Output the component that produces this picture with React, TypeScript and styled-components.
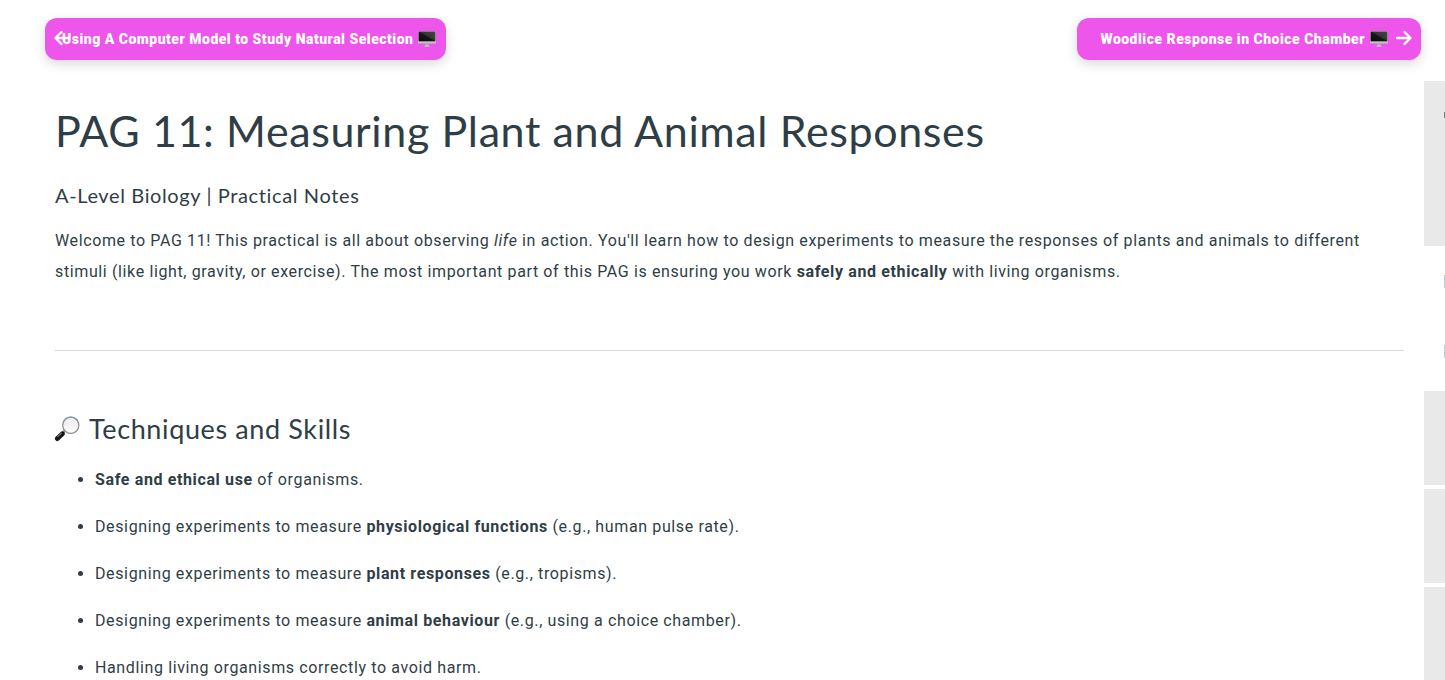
import React from "react";
import styled, { createGlobalStyle } from "styled-components";

const GlobalStyle = createGlobalStyle`
  *, *::before, *::after { box-sizing: border-box; }
  body {
    margin: 0;
    background: #fff;
    color: #2f3e46;
    font-family: Roboto, "Liberation Sans", sans-serif;
    font-size: 16px;
    line-height: 31px;
    letter-spacing: 0.039em;
    overflow-x: hidden;
  }
`;

const PagerNav = styled.nav`
  display: flex;
  justify-content: space-between;
  padding: 18px 24px 21px 45px;
`;

const PagerLink = styled.a<{ $direction: "previous" | "next" }>`
  position: relative;
  display: flex;
  align-items: center;
  gap: 5px;
  height: 42px;
  padding: ${(p) => (p.$direction === "previous" ? "0 10px 0 17px" : "0 33px 0 23px")};
  border-radius: 12px;
  background: #ee55eb;
  box-shadow: 0 4px 12px rgba(0, 0, 0, 0.15);
  color: #fff;
  font-size: 14px;
  font-weight: 900;
  letter-spacing: 0.035em;
  line-height: 20px;
  text-decoration: none;
  white-space: nowrap;
`;

const ArrowIcon = styled.svg<{ $side: "left" | "right" }>`
  position: absolute;
  top: 12px;
  ${(p) => p.$side}: 9px;
  width: 16px;
  height: 16px;
`;

const ScreenIcon = styled.svg`
  width: 18px;
  height: 16px;
`;

const Layout = styled.div`
  display: grid;
  grid-template-columns: minmax(0, 1fr) 21px;
`;

const Article = styled.main`
  padding: 24px 20px 0 55px;
`;

const Title = styled.h1`
  margin: 0;
  font-family: Lato, "Open Sans", sans-serif;
  font-size: 43px;
  font-weight: 400;
  line-height: 52px;
`;

const Subtitle = styled.h2`
  margin: 25px 0 17px;
  font-family: Lato, "Open Sans", sans-serif;
  font-size: 20px;
  font-weight: 400;
  line-height: 26px;
`;

const Intro = styled.p`
  margin: 0;
`;

const Divider = styled.hr`
  height: 1px;
  margin: 63px 0 61px;
  border: 0;
  background: #d8dadb;
`;

const SectionTitle = styled.h2`
  display: flex;
  align-items: center;
  gap: 9px;
  margin: 0 0 18px;
  font-family: Lato, "Open Sans", sans-serif;
  font-size: 27px;
  font-weight: 400;
  line-height: 34px;
`;

const LensIcon = styled.svg`
  width: 25px;
  height: 26px;
`;

const SkillList = styled.ul`
  display: grid;
  gap: 16px;
  margin: 0;
  padding: 0 0 0 40px;
`;

const Sidebar = styled.aside`
  display: flex;
  flex-direction: column;
  gap: 4px;
  overflow: hidden;
`;

const SidebarPanel = styled.div<{ $height: number }>`
  display: flex;
  justify-content: flex-end;
  height: ${(p) => p.$height}px;
  padding-top: 31px;
  background: #e9e9e9;
`;

const SidebarLinks = styled.div`
  display: flex;
  flex-direction: column;
  align-items: flex-end;
  gap: 57px;
  height: 137px;
  padding-top: 25px;
`;

const EdgeMark = styled.span<{ $height: number; $color: string }>`
  width: 1px;
  height: ${(p) => p.$height}px;
  background: ${(p) => p.$color};
`;

function Arrow({ side }: { side: "left" | "right" }) {
  return (
    <ArrowIcon $side={side} viewBox="0 0 16 16" fill="none" stroke="#fff" strokeWidth="2.3" strokeLinecap="round" strokeLinejoin="round" aria-hidden="true">
      {side === "left" ? <path d="M15 8H1.5M7.5 2 1.5 8l6 6" /> : <path d="M1 8h13.5M8.5 2l6 6-6 6" />}
    </ArrowIcon>
  );
}

function Screen() {
  return (
    <ScreenIcon viewBox="0 0 18 16" aria-hidden="true">
      <defs>
        <linearGradient id="screenGlass" x1="0" y1="1" x2="1" y2="0">
          <stop offset="0" stopColor="#080808" />
          <stop offset=".5" stopColor="#191919" />
          <stop offset=".52" stopColor="#333" />
          <stop offset="1" stopColor="#484848" />
        </linearGradient>
      </defs>
      <path d="M7 12h4v2.2l.8 1.5H6.2l.8-1.5z" fill="#c4bfc4" />
      <rect width="18" height="12.4" rx=".6" fill="#c2c2c2" />
      <rect x=".6" y=".5" width="16.8" height="9.8" fill="url(#screenGlass)" />
      <path d="M7 12.6h4v1H7z" fill="#999" />
    </ScreenIcon>
  );
}

function Lens() {
  return (
    <LensIcon viewBox="0 0 25 26" aria-hidden="true">
      <defs>
        <linearGradient id="lensGlass" x1="0" y1="0" x2="0" y2="1">
          <stop offset="0" stopColor="#eaf0f4" />
          <stop offset=".5" stopColor="#f3f3f3" />
          <stop offset="1" stopColor="#fff" />
        </linearGradient>
      </defs>
      <path d="M7.5 17 10.4 14.2" stroke="#8b8b8b" strokeWidth="2.6" />
      <path d="M2.4 22.6 7.4 17.8" stroke="#151515" strokeWidth="4.8" strokeLinecap="round" />
      <path d="M2.4 20.8 6.6 17" stroke="#777" strokeWidth="1.1" />
      <circle cx="15.8" cy="9.2" r="8.1" fill="url(#lensGlass)" stroke="#909396" strokeWidth="1.3" />
      <path d="M9 4.9a8.1 8.1 0 0 1 13.6 0" fill="none" stroke="#7d9cb7" strokeWidth="1.2" />
    </LensIcon>
  );
}

export default function App() {
  return (
    <>
      <GlobalStyle />
      <PagerNav aria-label="Practicals">
        <PagerLink href="#previous" $direction="previous">
          <Arrow side="left" />
          Using A Computer Model to Study Natural Selection
          <Screen />
        </PagerLink>
        <PagerLink href="#next" $direction="next">
          Woodlice Response in Choice Chamber
          <Screen />
          <Arrow side="right" />
        </PagerLink>
      </PagerNav>
      <Layout>
        <Article>
          <Title>PAG 11: Measuring Plant and Animal Responses</Title>
          <Subtitle>A-Level Biology | Practical Notes</Subtitle>
          <Intro>
            Welcome to PAG 11! This practical is all about observing <em>life</em> in action. You'll learn how to
            design experiments to measure the responses of plants and animals to different stimuli (like light,
            gravity, or exercise). The most important part of this PAG is ensuring you work{" "}
            <strong>safely and ethically</strong> with living organisms.
          </Intro>
          <Divider />
          <SectionTitle>
            <Lens />
            Techniques and Skills
          </SectionTitle>
          <SkillList>
            <li><strong>Safe and ethical use</strong> of organisms.</li>
            <li>Designing experiments to measure <strong>physiological functions</strong> (e.g., human pulse rate).</li>
            <li>Designing experiments to measure <strong>plant responses</strong> (e.g., tropisms).</li>
            <li>Designing experiments to measure <strong>animal behaviour</strong> (e.g., using a choice chamber).</li>
            <li>Handling living organisms correctly to avoid harm.</li>
          </SkillList>
        </Article>
        <Sidebar>
          <SidebarPanel $height={165}>
            <EdgeMark $height={6} $color="#777" />
          </SidebarPanel>
          <SidebarLinks>
            <EdgeMark $height={13} $color="#c3ccd3" />
            <EdgeMark $height={13} $color="#c3ccd3" />
          </SidebarLinks>
          <SidebarPanel $height={94} />
          <SidebarPanel $height={94} />
          <SidebarPanel $height={94} />
        </Sidebar>
      </Layout>
    </>
  );
}
